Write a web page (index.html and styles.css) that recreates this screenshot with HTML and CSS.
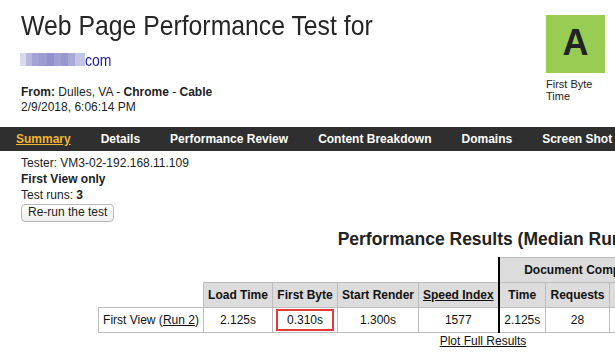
FILE: index.html
```html
<!DOCTYPE html>
<html>
<head>
<meta charset="utf-8">
<title>Web Page Performance Test</title>
<link rel="stylesheet" href="styles.css">
</head>
<body>
<header class="page-header">
  <div class="header-main">
    <h1 class="title">
      <span class="title-line">Web Page Performance Test for</span>
      <span class="url-line"><span class="url-blur"></span><a class="url-text" href="#">com</a></span>
    </h1>
    <div class="test-info">
      <div><b>From:</b> Dulles, VA - <b>Chrome</b> - <b>Cable</b></div>
      <div>2/9/2018, 6:06:14 PM</div>
    </div>
  </div>
  <div class="grade">
    <div class="grade-box">A</div>
    <div class="grade-label">First Byte<br>Time</div>
  </div>
</header>

<nav class="tabs">
  <a class="tab active" href="#">Summary</a>
  <a class="tab" href="#">Details</a>
  <a class="tab" href="#">Performance Review</a>
  <a class="tab" href="#">Content Breakdown</a>
  <a class="tab" href="#">Domains</a>
  <a class="tab" href="#">Screen Shot</a>
  <a class="tab" href="#">Image Analysis</a>
</nav>

<section class="summary">
  <div>Tester: VM3-02-192.168.11.109</div>
  <div><b>First View only</b></div>
  <div>Test runs: <b>3</b></div>
  <button class="rerun" type="button">Re-run the test</button>
</section>

<section class="results">
  <div class="results-inner">
    <h2 class="results-title">Performance Results (Median Run)</h2>
    <table class="metrics">
      <colgroup>
        <col class="c-view">
        <col class="c-load">
        <col class="c-ttfb">
        <col class="c-render">
        <col class="c-si">
        <col class="c-time">
        <col class="c-req">
        <col class="c-bytes">
        <col class="c-time">
        <col class="c-req">
        <col class="c-bytes">
        <col class="c-cost">
      </colgroup>
      <tr>
        <th class="blank" colspan="5"></th>
        <th class="sep" colspan="3">Document Complete</th>
        <th class="sep" colspan="4">Fully Loaded</th>
      </tr>
      <tr>
        <th class="blank"></th>
        <th>Load Time</th>
        <th>First Byte</th>
        <th>Start Render</th>
        <th><a class="plain-link" href="#">Speed Index</a></th>
        <th class="sep">Time</th>
        <th>Requests</th>
        <th>Bytes In</th>
        <th class="sep">Time</th>
        <th>Requests</th>
        <th>Bytes In</th>
        <th>Cost</th>
      </tr>
      <tr>
        <td>First View (<a class="plain-link" href="#">Run 2</a>)</td>
        <td>2.125s</td>
        <td class="hl"><span class="hl-box">0.310s</span></td>
        <td>1.300s</td>
        <td>1577</td>
        <td class="sep">2.125s</td>
        <td>28</td>
        <td>451 KB</td>
        <td class="sep">2.239s</td>
        <td>29</td>
        <td>452 KB</td>
        <td>$$---</td>
      </tr>
    </table>
    <div class="plot"><a class="plain-link" href="#">Plot Full Results</a></div>
  </div>
</section>
</body>
</html>
```

FILE: styles.css
```css
html, body {
  margin: 0;
  padding: 0;
  overflow: hidden;
  background: #fff;
}

body {
  font-family: "Liberation Sans", Arial, sans-serif;
  font-size: 12px;
  color: #222;
}

/* ---------- header ---------- */
.page-header {
  display: flex;
  justify-content: space-between;
  align-items: flex-start;
  padding-left: 21px;
}

.title {
  margin: 0;
  padding-top: 10px;
  font-weight: normal;
  color: #262626;
}

.title-line {
  display: block;
  font-size: 28px;
  line-height: 32px;
  white-space: nowrap;
  transform: scaleX(0.885);
  transform-origin: 0 0;
}

.url-line {
  display: block;
  margin-top: 8px;
  font-size: 16px;
  line-height: 21px;
  white-space: nowrap;
}

.url-blur {
  display: inline-block;
  width: 65px;
  height: 13px;
  margin-left: -1px;
  background: linear-gradient(to right,
    #d9d9ef 0 9%, #b9b9e0 9% 19%, #a3a3d6 19% 30%, #9c9cd3 30% 41%,
    #9292ce 41% 52%, #a0a0d5 52% 63%, #9898d1 63% 74%, #a8a8d9 74% 85%,
    #c4c4e6 85% 100%);
  filter: blur(0.6px);
}

.url-text {
  display: inline-block;
  color: #1d1da6;
  text-decoration: none;
  transform: scaleX(0.875);
  transform-origin: 0 0;
}

.test-info {
  margin-top: 14px;
  line-height: 15px;
}

.grade {
  width: 59px;
  margin: 15px 10px 0 0;
  flex-shrink: 0;
}

.grade-box {
  box-sizing: border-box;
  width: 59px;
  height: 58px;
  padding-bottom: 3px;
  display: flex;
  align-items: center;
  justify-content: center;
  background: #99cc52;
  color: #222;
  font-size: 36px;
  font-weight: bold;
  line-height: 36px;
}

.grade-label {
  margin-top: 5px;
  font-size: 11px;
  line-height: 12px;
  color: #222;
}

/* ---------- tabs ---------- */
.tabs {
  display: flex;
  margin-top: 12px;
  height: 24px;
  padding-left: 1px;
  background: #2f2f2f;
}

.tab {
  flex-shrink: 0;
  padding: 0 15px;
  line-height: 24px;
  color: #fff;
  font-weight: bold;
  text-decoration: none;
  white-space: nowrap;
}

.tab.active {
  color: #f2b630;
  text-decoration: underline;
}

/* ---------- summary ---------- */
.summary {
  margin-top: 4px;
  padding-left: 21px;
  line-height: 16px;
}

.rerun {
  display: block;
  margin-top: 1px;
  padding: 1px 6px;
  border: 1px solid #b8b8b8;
  border-radius: 4px;
  background: linear-gradient(#ffffff, #efefef);
  color: #222;
  font-family: "Liberation Sans", Arial, sans-serif;
  font-size: 12px;
  line-height: 13.5px;
}

/* ---------- results ---------- */
.results {
  margin-top: 7px;
  padding-left: 98px;
}

.results-inner {
  width: max-content;
}

.results-title {
  margin: 0 0 8px;
  font-size: 17.5px;
  line-height: 20px;
  font-weight: bold;
  text-align: center;
  color: #222;
}

.metrics {
  table-layout: fixed;
  width: 765px;
  border-collapse: collapse;
  font-size: 12px;
  color: #111;
}

.c-view { width: 105px; }
.c-load { width: 69px; }
.c-ttfb { width: 65px; }
.c-render { width: 81px; }
.c-si { width: 80px; }
.c-time { width: 47px; }
.c-req { width: 64px; }
.c-bytes { width: 57px; }
.c-cost { width: 33px; }

.metrics th,
.metrics td {
  border: 1px solid #bcbcbc;
  padding: 5px 2px;
  line-height: 14px;
  text-align: center;
  white-space: nowrap;
  overflow: hidden;
}

.metrics th {
  background: #dcdcdc;
  font-weight: bold;
}

.metrics .blank {
  border: none;
  background: none;
}

.metrics .sep {
  border-left: 2px solid #000;
}

.metrics .hl {
  padding: 1px 3px;
}

.hl-box {
  display: block;
  border: 2px solid #e53a3a;
  line-height: 18px;
}

.plain-link {
  color: #111;
  text-decoration: underline;
}

.plot {
  text-align: center;
  line-height: 16px;
}
```
